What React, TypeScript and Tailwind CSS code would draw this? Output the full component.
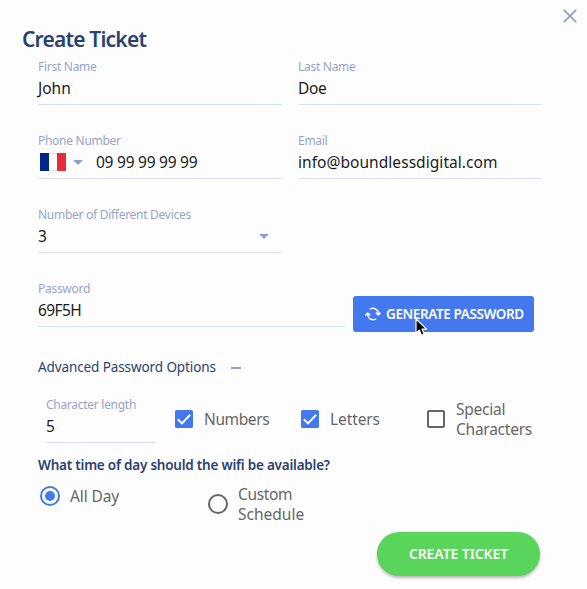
import { clsx } from 'clsx'
import type { ReactNode } from 'react'

interface FieldProps {
  label: string
  className?: string
  children: ReactNode
}

const Field = ({ label, className, children }: FieldProps) => (
  <div className={clsx('flex h-[46px] flex-col border-b border-[#d9e1f4]', className)}>
    <span className="h-4 text-[12px] leading-4 tracking-[-0.28px] text-[#97a4c8]">
      {label}
    </span>
    <div className="flex h-7 items-center text-[15.5px] text-[#1b1b1b]">
      {children}
    </div>
  </div>
)

const Caret = ({ className }: { className?: string }) => (
  <svg viewBox="0 0 10 5" className={clsx('mb-[2px] h-[5px] w-[10px]', className)}>
    <path d="M0 0h10L5 5z" fill="#8f9fc6" />
  </svg>
)

const FrenchFlag = () => (
  <div className="mb-[2px] ml-[2px] flex h-[18px] w-[26px]">
    <span className="flex-1 bg-[#04258a]" />
    <span className="flex-1 border-y border-[#e4e4e8] bg-white" />
    <span className="flex-1 bg-[#e62e3a]" />
  </div>
)

const SyncIcon = () => (
  <svg
    viewBox="0 0 16 14"
    className="h-[14px] w-4"
    fill="none"
    stroke="white"
    strokeWidth="1.4"
    strokeLinecap="round"
    strokeLinejoin="round"
  >
    <path d="M5.2 2A5.4 5.4 0 0 1 13.3 7.2M10.8 12A5.4 5.4 0 0 1 2.7 6.8" />
    <path d="M.8 7.8 2.7 6l2.1 1.8z" fill="white" />
    <path d="m11.2 6.2 2.1 1.8 1.9-1.8z" fill="white" />
  </svg>
)

interface OptionProps {
  checked?: boolean
  className?: string
  children: ReactNode
}

const Checkbox = ({ checked, className, children }: OptionProps) => (
  <label className={clsx('flex items-center text-[15.5px] leading-5 text-[#666]', className)}>
    <svg viewBox="0 0 18 18" className="mr-[11px] size-[18px] shrink-0">
      {checked ? (
        <>
          <rect width="18" height="18" rx="1.5" fill="#4478ee" />
          <path d="m2.8 9.2 4.2 4.2 8.2-8.6" fill="none" stroke="white" strokeWidth="2" />
        </>
      ) : (
        <rect x="1" y="1" width="16" height="16" rx="1" fill="none" stroke="#666" strokeWidth="2" />
      )}
    </svg>
    <span>{children}</span>
  </label>
)

const Radio = ({ checked, className, children }: OptionProps) => (
  <label className={clsx('flex items-center text-[15.5px] leading-5 text-[#666]', className)}>
    <svg viewBox="0 0 20 20" className="mr-[10px] size-5 shrink-0">
      <circle
        cx="10"
        cy="10"
        r="9"
        fill="none"
        stroke={checked ? '#4478ee' : '#666'}
        strokeWidth="2"
      />
      {checked && <circle cx="10" cy="10" r="5" fill="#4478ee" />}
    </svg>
    <span>{children}</span>
  </label>
)

const Pointer = () => (
  <svg viewBox="0 0 14 20" className="absolute left-[62px] top-[22px] h-5 w-[14px]">
    <path
      d="M1 1v14.2l3.3-3.1 2.2 5.2 2.7-1.1L7 11.1h4.6z"
      fill="black"
      stroke="white"
      strokeWidth="1.2"
      strokeLinejoin="round"
    />
  </svg>
)

export default function App() {
  return (
    <div className="h-[589px] w-[587px] overflow-hidden bg-[#fdfdfd] font-['Noto_Sans',sans-serif]">
      <header className="flex h-[59px] justify-between pl-[22px] pr-[10px]">
        <h1 className="pt-[25px] text-[21px] font-semibold leading-7 tracking-[-0.8px] text-[#2a4270]">
          Create Ticket
        </h1>
        <button type="button" className="mt-[9px] size-[14px]" aria-label="Close">
          <svg viewBox="0 0 14 14" className="size-full">
            <path d="m.8.8 12.4 12.4M13.2.8.8 13.2" stroke="#8f9fc6" strokeWidth="1.8" />
          </svg>
        </button>
      </header>

      <main className="pl-[38px]">
        <div className="grid grid-cols-[244px_244px] gap-x-4 gap-y-7">
          <Field label="First Name">John</Field>
          <Field label="Last Name">
            <span className="tracking-[-0.3px]">Doe</span>
          </Field>
          <Field label="Phone Number">
            <FrenchFlag />
            <Caret className="ml-[7px]" />
            <span className="ml-[13px] tracking-[-0.25px]">09 99 99 99 99</span>
          </Field>
          <Field label="Email">
            <span className="tracking-[0.05px]">info@boundlessdigital.com</span>
          </Field>
          <Field label="Number of Different Devices">
            3
            <Caret className="ml-auto mr-[13px]" />
          </Field>
        </div>

        <div className="mt-7 flex h-[46px] gap-2">
          <Field label="Password" className="w-[307px]">
            <span className="tracking-[-0.6px]">69F5H</span>
          </Field>
          <button
            type="button"
            className="relative mt-[15px] flex h-9 w-[181px] items-center rounded-[3px] bg-[#4478ee] pl-[11.5px] text-[13.5px] font-semibold tracking-[-0.4px] text-white"
          >
            <SyncIcon />
            <span className="ml-[5.5px] whitespace-nowrap">GENERATE PASSWORD</span>
            <Pointer />
          </button>
        </div>

        <div className="mt-[30px] flex h-5 items-center text-[13.5px] leading-5 tracking-[-0.1px] text-[#2a4270]">
          Advanced Password Options
          <span className="ml-[15px] mt-px h-[2px] w-[10px] bg-[#93a5cd]" />
        </div>

        <div className="mt-5 flex h-[46px] pl-2">
          <Field label="Character length" className="w-[110px]">5</Field>
          <Checkbox checked className="mb-[2px] ml-[19px] w-[126px] tracking-[-0.4px]">
            Numbers
          </Checkbox>
          <Checkbox checked className="mb-[2px] w-[126px] tracking-[-0.1px]">Letters</Checkbox>
          <Checkbox className="mb-[2px] tracking-[-0.25px]">
            Special
            <br />
            Characters
          </Checkbox>
        </div>

        <p className="mt-3 h-5 text-[13.5px] font-semibold leading-5 tracking-[-0.22px] text-[#2a4270]">
          What time of day should the wifi be available?
        </p>

        <div className="mt-[9px] flex items-start pl-[2px]">
          <Radio checked className="mt-[2px] w-[168px] tracking-[-0.1px]">All Day</Radio>
          <Radio>
            <span className="tracking-[-0.35px]">Custom</span>
            <br />
            Schedule
          </Radio>
        </div>

        <button
          type="button"
          className="ml-[339px] mt-2 h-11 w-[163px] rounded-full bg-[#58d55a] pb-[2px] text-[14px] font-semibold tracking-[-0.1px] text-white shadow-[0_2px_3px_rgba(0,0,0,0.28)]"
        >
          CREATE TICKET
        </button>
      </main>
    </div>
  )
}
